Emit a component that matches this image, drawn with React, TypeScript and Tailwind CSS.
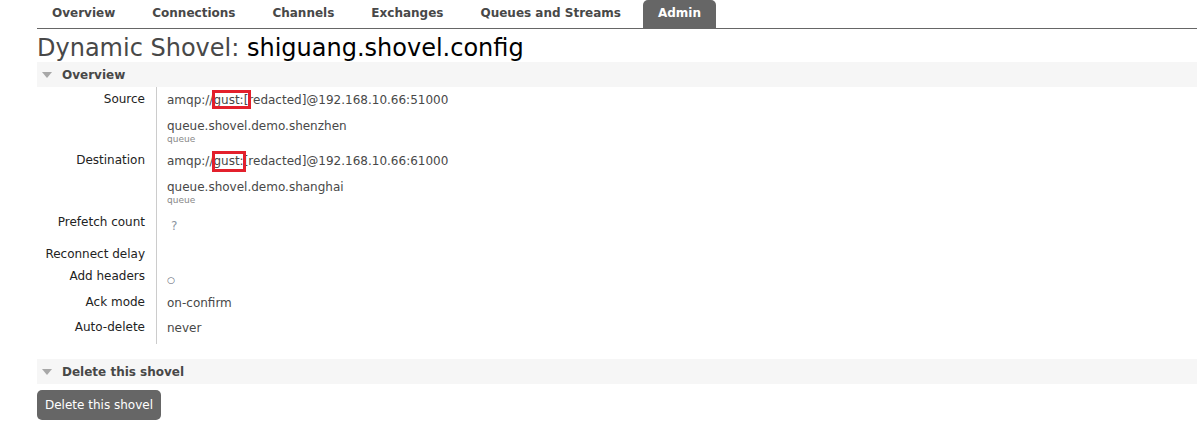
import React from "react";

const tabs = ["Overview", "Connections", "Channels", "Exchanges", "Queues and Streams", "Admin"];

// red annotation box drawn over part of the uri
const Marked = ({ text, box }: { text: string; box: string }) => (
  <span className="relative">
    {text}
    <span className={`absolute border-[3px] border-[#e3202c] ${box}`} />
  </span>
);

const SectionHeader = ({ title }: { title: string }) => (
  <div className="flex h-[25px] items-center bg-[#f6f6f6] pl-[5px]">
    <span className="mr-[10px] h-0 w-0 border-x-[5px] border-t-[6px] border-x-transparent border-t-[#a8a8a8]" />
    <span className="text-[12px] font-bold text-[#484848]">{title}</span>
  </div>
);

interface RowProps {
  label: string;
  h: string;
  lpt: string;
  vpt: string;
  children?: React.ReactNode;
}

const Row = ({ label, h, lpt, vpt, children }: RowProps) => (
  <div className={`flex ${h}`}>
    <div className={`w-[119px] shrink-0 pr-[11px] text-right leading-[16px] text-[#222] ${lpt}`}>{label}</div>
    <div className={`border-l border-[#cccccc] pl-[10px] leading-[16px] text-[#484848] ${vpt}`}>{children}</div>
  </div>
);

export default function App() {
  return (
    <div className="min-h-[422px] bg-white pl-[37px] font-['DejaVu_Sans',Verdana,sans-serif] text-[12px]">
      {/* top nav */}
      <ul className="flex h-[29px] items-end border-b border-[#666666]">
        {tabs.map((t) => (
          <li
            key={t}
            className={`mr-[7px] flex h-[28px] items-center rounded-t-[5px] px-[15px] pb-[2px] text-[12px] font-bold ${
              t === "Admin" ? "bg-[#666666] text-white" : "text-[#484848]"
            }`}
          >
            {t}
          </li>
        ))}
      </ul>

      <h1 className="flex h-[33px] items-center pt-[4px] text-[24px] leading-none text-[#484848]">
        Dynamic Shovel:&nbsp;<span className="text-black">shiguang.shovel.config</span>
      </h1>

      <SectionHeader title="Overview" />

      <div>
        <Row label="Source" h="h-[61px]" lpt="pt-[4px]" vpt="pt-[5px]">
          <div className="h-[16px]">
            amqp://
            <Marked text="gust:" box="-left-[1px] -right-[7px] -top-[3px] -bottom-[2px]" />
            [redacted]@192.168.10.66:51000
          </div>
          <div className="mt-[10px] h-[16px]">queue.shovel.demo.shenzhen</div>
          <div className="text-[9px] leading-[11px] text-[#888888]">queue</div>
        </Row>
        <Row label="Destination" h="h-[62px]" lpt="pt-[4px]" vpt="pt-[5px]">
          <div className="h-[16px]">
            amqp:/
            <Marked text="/gust" box="left-[3px] -right-[6px] -top-[3px] -bottom-[4px]" />
            :[redacted]@192.168.10.66:61000
          </div>
          <div className="mt-[10px] h-[16px]">queue.shovel.demo.shanghai</div>
          <div className="text-[9px] leading-[11px] text-[#888888]">queue</div>
        </Row>
        <Row label="Prefetch count" h="h-[32px]" lpt="pt-[4px]" vpt="pt-[8px]">
          <span className="pl-[4px] text-[#8a94a0]">?</span>
        </Row>
        <Row label="Reconnect delay" h="h-[22px]" lpt="pt-[4px]" vpt="pt-[3px]" />
        <Row label="Add headers" h="h-[25px]" lpt="pt-[4px]" vpt="pt-[7px]">
          <span className="text-[9px] text-[#5a6470]">○</span>
        </Row>
        <Row label="Ack mode" h="h-[25px]" lpt="pt-[5px]" vpt="pt-[6px]">
          on-confirm
        </Row>
        <Row label="Auto-delete" h="h-[30px]" lpt="pt-[5px]" vpt="pt-[6px]">
          never
        </Row>
      </div>

      <div className="mt-[15px]">
        <SectionHeader title="Delete this shovel" />
      </div>

      <button className="mt-[6px] h-[30px] rounded-[5px] bg-[#666666] px-[8px] text-[12px] text-white">
        Delete this shovel
      </button>
    </div>
  );
}
